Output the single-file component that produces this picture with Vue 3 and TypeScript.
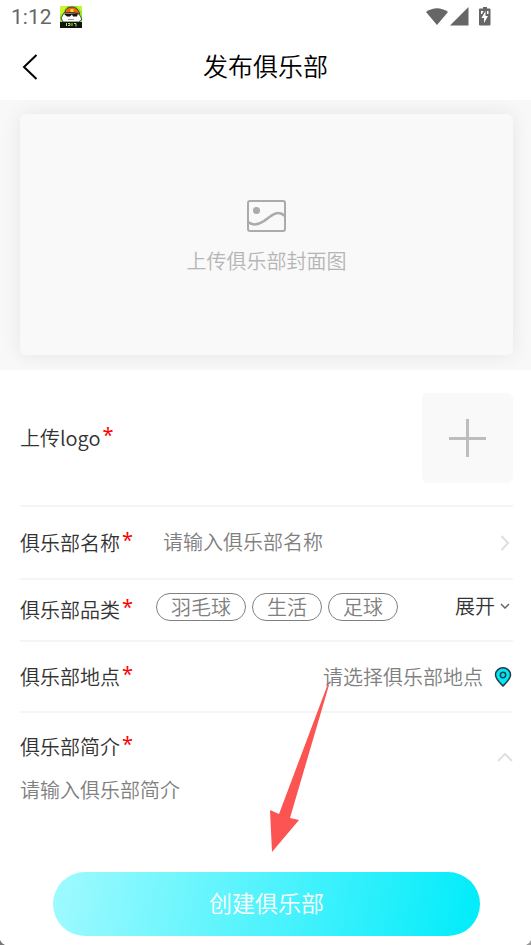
<script setup lang="ts">
import { ref } from 'vue'

const clubName = ref('')
const intro = ref('')
const categories: string[] = ['羽毛球', '生活', '足球']
const selected = ref<string[]>([])

function toggle(name: string): void {
  selected.value = selected.value.includes(name)
    ? selected.value.filter((item) => item !== name)
    : [...selected.value, name]
}
</script>

<template>
  <div class="page">
    <div class="status">
      <span class="clock">1:12</span>
      <svg class="app-icon" viewBox="0 0 22 22" aria-hidden="true">
        <rect width="22" height="22" fill="#8eea2c" />
        <path d="M0 0h7L2 8H0zM17 0h5v6z" fill="#c9f52f" />
        <path d="M1 12l3-5h14l3 4 .5 3-3 2H3z" fill="#fff" stroke="#222" stroke-width=".8" />
        <path d="M5 7c0-4 3-6 7-6s7 3 7.500 7l-3.500-1-6-.5z" fill="#e3661b" stroke="#3a1d08" stroke-width=".8" />
        <path d="M10.500 3h3v3h-3z" fill="#ffd52e" />
        <path d="M4 8l14-.5-1 3h-4l-1-2-2 2H7z" fill="#151515" />
        <path d="M8 13.500h6" stroke="#999" stroke-width="1" />
        <rect y="16" width="22" height="6" fill="#11150f" />
        <path d="M6.500 17v3M8 17.500h2v2H8M12 17v3M14 17.500h2v3" stroke="#a5e85b" stroke-width="1" fill="none" />
      </svg>
      <svg class="signals" viewBox="0 0 66 20" aria-hidden="true">
        <path d="M1 5Q12-2.500 23 5L12 18z" fill="#666" />
        <path d="M25 18.500L43.500 0v18.500z" fill="#666" />
        <path d="M58 0h4v1.500h2.500q1 0 1 1V17.500q0 1-1 1H55q-1 0-1-1V2.500q0-1 1-1h3z" fill="#666" />
        <path d="M60.500 4l-4 7H59v5l4-7h-2.500z" fill="#fff" />
        <path d="M56 4h2.500L57 7h-1zM62 4h1.500v3H62z" fill="#fff" />
      </svg>
    </div>

    <header class="header">
      <button class="back" type="button" aria-label="返回">
        <svg viewBox="0 0 16 26" aria-hidden="true">
          <path d="M14.500 1L2 13l12.500 12" fill="none" stroke="#000" stroke-width="2" />
        </svg>
      </button>
      <h1>发布俱乐部</h1>
    </header>

    <section class="cover">
      <button class="cover-card" type="button">
        <svg viewBox="0 0 40 32" aria-hidden="true">
          <rect x="1" y="1" width="37" height="30" rx="2" fill="none" stroke="#ababab" stroke-width="2" />
          <circle cx="9.500" cy="10.500" r="3.500" fill="#ababab" />
          <path d="M1 22C6 26 11 25 17 21C24 16 30 9 38 16" fill="none" stroke="#ababab" stroke-width="2.500" />
        </svg>
        <span>上传俱乐部封面图</span>
      </button>
    </section>

    <form class="form" @submit.prevent>
      <div class="row row-logo">
        <label class="label" for="logo">上传logo<i>*</i></label>
        <button id="logo" class="logo-add" type="button">
          <svg viewBox="0 0 38 38" aria-hidden="true">
            <path d="M18.500 0v38M0 19.500h37" stroke="#bdbdbd" stroke-width="3" />
          </svg>
        </button>
      </div>

      <div class="row row-name">
        <label class="label" for="name">俱乐部名称<i>*</i></label>
        <input id="name" v-model="clubName" class="field" type="text" placeholder="请输入俱乐部名称" />
        <svg class="chevron-right" viewBox="0 0 10 16" aria-hidden="true">
          <path d="M1.500 1L8 8l-6.500 7" fill="none" stroke="#dfdfdf" stroke-width="2" />
        </svg>
      </div>

      <div class="row row-category">
        <span class="label">俱乐部品类<i>*</i></span>
        <div class="category">
          <div class="tags">
            <button
              v-for="item in categories"
              :key="item"
              class="tag"
              type="button"
              :aria-pressed="selected.includes(item)"
              @click="toggle(item)"
            >{{ item }}</button>
          </div>
          <button class="expand" type="button">
            展开
            <svg viewBox="0 0 10 6" aria-hidden="true">
              <path d="M1 1l4 4 4-4" fill="none" stroke="#666" stroke-width="1.500" />
            </svg>
          </button>
        </div>
      </div>

      <div class="row row-place">
        <label class="label" for="place">俱乐部地点<i>*</i></label>
        <button id="place" class="place" type="button">
          请选择俱乐部地点
          <svg viewBox="0 0 18 20" aria-hidden="true">
            <path d="M9 19C6 16 1.500 12 1.500 7.800a7.500 7 0 0 1 15 0C16.500 12 12 16 9 19z" fill="#00e8f8" stroke="#263c42" stroke-width="1.500" />
            <circle cx="9" cy="8" r="2.700" fill="none" stroke="#17404a" stroke-width="1.500" />
          </svg>
        </button>
      </div>

      <div class="intro">
        <div class="intro-main">
          <label class="label" for="intro">俱乐部简介<i>*</i></label>
          <textarea id="intro" v-model="intro" class="field" placeholder="请输入俱乐部简介"></textarea>
        </div>
        <svg class="chevron-up" viewBox="0 0 16 10" aria-hidden="true">
          <path d="M1 9l7-7 7 7" fill="none" stroke="#e0e0e0" stroke-width="2" />
        </svg>
      </div>

      <button class="submit" type="submit">创建俱乐部</button>
    </form>

    <svg class="pointer" viewBox="0 0 60 170" aria-hidden="true">
      <path d="M59 1L20 134L29 136L2 168L0 126L9 130L57.500 1z" fill="#fc5353" />
    </svg>
    <svg class="corner corner-left" viewBox="0 0 5 5" aria-hidden="true"><path d="M0 0Q1 3 5 5H0z" fill="#777" /></svg>
    <svg class="corner corner-right" viewBox="0 0 5 5" aria-hidden="true"><path d="M5 0Q4 3 0 5h5z" fill="#999" /></svg>
  </div>
</template>

<style>
body {
  margin: 0;
  background: #fff;
}
</style>

<style scoped>
.page {
  position: relative;
  display: flex;
  flex-direction: column;
  min-height: 100vh;
  background: #fff;
  color: #333;
  font-family: "Noto Sans CJK SC", sans-serif;
  font-size: 20px;
  line-height: 28px;
  font-weight: 350;
}

* {
  box-sizing: border-box;
}

svg {
  display: block;
  flex: none;
}

button,
input,
textarea {
  margin: 0;
  padding: 0;
  border: 0;
  background: none;
  color: inherit;
  font: inherit;
}

button {
  cursor: pointer;
}

.status {
  display: flex;
  align-items: center;
  gap: 8px;
  height: 34px;
  padding: 0 40px 0 11px;
}

.clock {
  color: #666;
  font-family: Roboto, sans-serif;
  font-size: 21px;
  font-weight: 400;
}

.app-icon {
  width: 22px;
  height: 22px;
}

.signals {
  width: 66px;
  height: 20px;
  margin-left: auto;
}

.header {
  display: grid;
  grid-template-columns: 40px 1fr 40px;
  align-items: center;
  height: 66px;
  padding: 0 20px;
}

.back {
  padding: 0 2px;
}

.back svg {
  width: 16px;
  height: 26px;
}

h1 {
  margin: 0;
  padding-bottom: 4px;
  color: #000;
  font-size: 25px;
  font-weight: 350;
  line-height: 36px;
  text-align: center;
}

.cover {
  padding: 14px 18px 15px 20px;
  background: #f8f8f8;
  overflow: hidden;
}

.cover-card {
  display: flex;
  flex-direction: column;
  align-items: center;
  justify-content: center;
  gap: 15px;
  width: 100%;
  height: 241px;
  padding-top: 6px;
  border-radius: 6px;
  background: #f9f9f9;
  box-shadow: 0 0 20px rgba(0, 0, 0, 0.08);
  color: #b5b5b5;
}

.cover-card svg {
  width: 40px;
  height: 32px;
}

.form {
  display: flex;
  flex-direction: column;
  padding: 0 18px 9px 20px;
}

.row {
  display: flex;
  align-items: center;
  justify-content: space-between;
  border-bottom: 2px solid #f5f5f5;
}

.row-logo {
  height: 137px;
}

.row-name {
  height: 73px;
}

.row-category {
  height: 62px;
}

.row-place {
  height: 71px;
}

.label {
  flex: none;
  white-space: nowrap;
}

.label i {
  margin-left: 2px;
  color: #f00;
  font-family: "Noto Sans", sans-serif;
  font-style: normal;
  font-weight: 400;
  line-height: 16px;
  vertical-align: 4px;
}

.logo-add {
  display: grid;
  place-items: center;
  width: 91px;
  height: 90px;
  border-radius: 6px;
  background: #f9f9f9;
}

.logo-add svg {
  width: 38px;
  height: 38px;
}

.field {
  min-width: 0;
  color: #333;
  outline: none;
}

.field::placeholder {
  color: #808080;
  opacity: 1;
}

.row-name .field {
  flex: 1;
  margin-left: 30px;
  padding-bottom: 2px;
}

.chevron-right {
  width: 10px;
  height: 16px;
  margin-right: 3px;
}

.category {
  display: flex;
  flex: 1;
  align-items: center;
  justify-content: space-between;
  margin-left: 23px;
  padding-bottom: 6px;
}

.tags {
  display: flex;
  gap: 6px;
}

.tag {
  height: 28px;
  padding: 0 14px;
  border: 1px solid #808080;
  border-radius: 14px;
  color: #808080;
  line-height: 26px;
}

.expand {
  display: flex;
  align-items: center;
  gap: 5px;
  padding-right: 3px;
  padding-bottom: 2px;
}

.expand svg {
  width: 10px;
  height: 6px;
}

.place {
  display: flex;
  align-items: center;
  gap: 11px;
  padding-right: 1px;
  color: #808080;
}

.place svg {
  width: 18px;
  height: 20px;
}

.intro {
  display: flex;
  align-items: flex-start;
  padding-top: 20px;
}

.intro-main {
  display: flex;
  flex: 1;
  flex-direction: column;
  gap: 15px;
}

.intro textarea {
  height: 76px;
  resize: none;
}

.chevron-up {
  width: 16px;
  height: 10px;
  margin-top: 19px;
}

.submit {
  height: 64px;
  margin: 20px 33px 0;
  padding-bottom: 4px;
  border-radius: 32px;
  background: linear-gradient(100deg, #a0faff, #00ecfa);
  color: #fff;
  font-size: 23px;
}

.pointer {
  position: absolute;
  top: 684px;
  left: 270px;
  width: 60px;
  height: 170px;
  pointer-events: none;
}

.corner {
  position: absolute;
  bottom: 0;
  width: 5px;
  height: 5px;
}

.corner-left {
  left: 0;
}

.corner-right {
  right: 0;
}
</style>
